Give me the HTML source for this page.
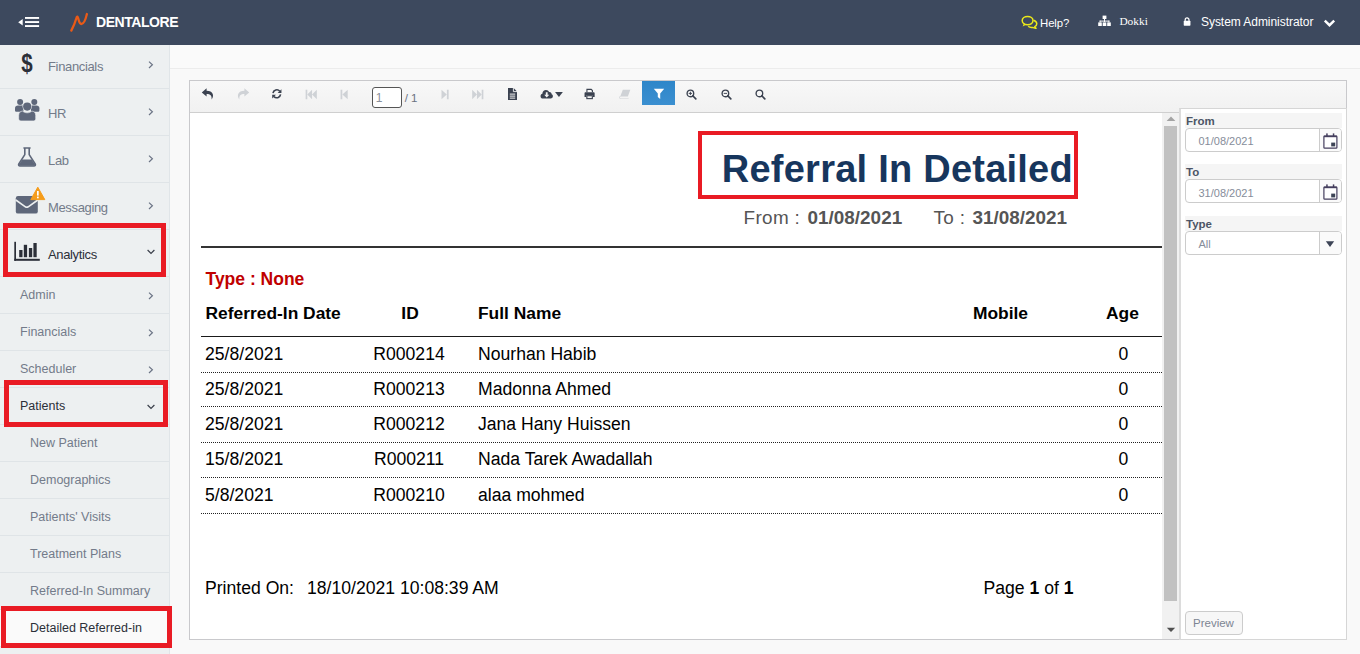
<!DOCTYPE html>
<html>
<head>
<meta charset="utf-8">
<title>Dentalore</title>
<style>
*{box-sizing:border-box;margin:0;padding:0}
html,body{width:1360px;height:654px;overflow:hidden;background:#f9f9f9;font-family:"Liberation Sans",sans-serif;}
body{position:relative}
.abs{position:absolute}
#topbar{position:absolute;left:0;top:0;width:1360px;height:45px;background:#3d495e;z-index:5}
#topbar .t{position:absolute;color:#fff;white-space:nowrap}
#sidebar{position:absolute;left:0;top:45px;width:170px;height:609px;background:#edf0f1;border-right:1px solid #e0e5e8;overflow:hidden}
.mi{position:absolute;left:0;width:169px;height:47px;border-bottom:1px solid #e0e4e7}
.mi .lbl{position:absolute;left:48px;top:17px;font-size:13px;color:#6b7280;white-space:nowrap;line-height:15px}
.mi.dark .lbl{color:#2b2f38}
.si{position:absolute;left:0;width:169px;height:37px;border-bottom:1px solid #e0e4e7}
.si .lbl{position:absolute;left:20px;top:10px;font-size:13px;color:#6b7280;white-space:nowrap;line-height:15px}
.si.l2 .lbl{left:30px}
.si.dark .lbl{color:#2b2f38}
.sl{font-size:12.5px;line-height:15px;white-space:nowrap}
.chev{position:absolute;left:146px;width:8px;height:10px}
.red{position:absolute;border:5px solid #e91b24;z-index:4}
#hdr{position:absolute;left:170px;top:45px;width:1190px;height:24px;background:#fafafa;border-bottom:1px solid #ececec}
#panel{position:absolute;left:189px;top:80px;width:1158px;height:559.5px;background:#fff;border:1px solid #c9c9cc}
#tb{position:absolute;left:0;top:0;width:1156px;height:32px;background:linear-gradient(#f8f8f8,#f1f1f1);border-bottom:1px solid #cfcfcf}
#panel>.abs{margin-left:0.7px}
.ic{position:absolute}
.rt{position:absolute;white-space:nowrap;color:#000;font-size:16px;line-height:18px}
.b{font-weight:bold}
.dot{position:absolute;left:11px;width:960px;height:0;border-top:1px dotted #222}
</style>
</head>
<body>
<div id="topbar">
<svg class="abs" style="left:18px;top:16px" width="22" height="12" viewBox="0 0 22 12"><path d="M0.2 6.3 L4.7 3 V9.6 Z" fill="#fff"/><rect x="7" y="1" width="14.1" height="1.9" fill="#fff"/><rect x="7" y="5.1" width="14.1" height="1.9" fill="#fff"/><rect x="7" y="9.1" width="14.1" height="1.9" fill="#fff"/></svg>
<svg class="abs" style="left:69px;top:12px" width="21" height="21" viewBox="0 0 21 21"><path d="M2.3 18.6 C4.2 15 6.4 9.6 7.8 5 C8.5 4.2 9 5.4 9.4 7 C10 9.6 10.8 12 12.4 12 C14.6 12 16.4 8.4 17.9 2" fill="none" stroke="#ea5a17" stroke-width="2.3" stroke-linecap="round" stroke-linejoin="round"/></svg>
<div class="t b" style="left:96px;top:14px;font-size:14px;line-height:16px;letter-spacing:-0.45px">DENTALORE</div>
<svg class="abs" style="left:1021px;top:15px" width="17" height="14" viewBox="0 0 17 14"><ellipse cx="6.6" cy="5.6" rx="5.4" ry="4.2" fill="none" stroke="#ece81a" stroke-width="1.5"/><path d="M3 8.6 L1.6 11.4 L5.6 9.6 Z" fill="#ece81a"/><path d="M12.6 5.2 C14.6 6 15.8 7.2 15.8 8.8 C15.8 10 15 11 13.8 11.6 L15 13.4 L11.4 12.4 C9.8 12.6 8.2 12.2 7.2 11.2" fill="none" stroke="#ece81a" stroke-width="1.5" stroke-linejoin="round"/></svg>
<div class="t" style="left:1040px;top:14.6px;font-size:11.4px;letter-spacing:-0.1px;line-height:16px">Help?</div>
<svg class="abs" style="left:1098px;top:15px" width="13" height="12" viewBox="0 0 13 12"><rect x="4.6" y="0.6" width="3.8" height="3.4" fill="#fff"/><rect x="6" y="4" width="1" height="3" fill="#fff"/><rect x="1.6" y="5.6" width="9.8" height="1" fill="#fff"/><rect x="1.6" y="5.6" width="1" height="2" fill="#fff"/><rect x="10.4" y="5.6" width="1" height="2" fill="#fff"/><rect x="0.2" y="7.4" width="3.6" height="3.6" fill="#fff"/><rect x="4.7" y="7.4" width="3.6" height="3.6" fill="#fff"/><rect x="9.2" y="7.4" width="3.6" height="3.6" fill="#fff"/></svg>
<div class="t" style="left:1119.4px;top:13px;font-size:11.4px;line-height:16px;font-family:'Liberation Serif',serif">Dokki</div>
<svg class="abs" style="left:1183.4px;top:17.3px" width="8.5" height="9.6" viewBox="0 0 10 12"><path d="M2.4 5 V3.6 C2.4 0.4 7.2 0.4 7.2 3.6 V5" fill="none" stroke="#fff" stroke-width="1.5"/><rect x="0.6" y="4.8" width="8.4" height="6" rx="0.8" fill="#fff"/></svg>
<div class="t" style="left:1201px;top:14.4px;font-size:12px;letter-spacing:-0.05px;line-height:16px">System Administrator</div>
<svg class="abs" style="left:1323px;top:18px" width="13" height="10" viewBox="0 0 13 10"><path d="M1.8 2.6 L6.5 7.2 L11.2 2.6" fill="none" stroke="#fff" stroke-width="2.4"/></svg>
</div>
<div id="sidebar"><div class="abs" style="left:0;top:43px;width:169px;height:1px;background:#dfe4e7"></div>
<div class="abs" style="left:0;top:90px;width:169px;height:1px;background:#dfe4e7"></div>
<div class="abs" style="left:0;top:137px;width:169px;height:1px;background:#dfe4e7"></div>
<div class="abs" style="left:0;top:184px;width:169px;height:1px;background:#dfe4e7"></div>
<div class="abs" style="left:0;top:231px;width:169px;height:1px;background:#dfe4e7"></div>
<div class="abs" style="left:0;top:268px;width:169px;height:1px;background:#dfe4e7"></div>
<div class="abs" style="left:0;top:305px;width:169px;height:1px;background:#dfe4e7"></div>
<div class="abs" style="left:0;top:342px;width:169px;height:1px;background:#dfe4e7"></div>
<div class="abs" style="left:0;top:379px;width:169px;height:1px;background:#dfe4e7"></div>
<div class="abs" style="left:0;top:416px;width:169px;height:1px;background:#dfe4e7"></div>
<div class="abs" style="left:0;top:453px;width:169px;height:1px;background:#dfe4e7"></div>
<div class="abs" style="left:0;top:490px;width:169px;height:1px;background:#dfe4e7"></div>
<div class="abs" style="left:0;top:527px;width:169px;height:1px;background:#dfe4e7"></div>
<div class="abs" style="left:0;top:564px;width:169px;height:1px;background:#dfe4e7"></div>
<div class="abs" style="left:0;top:601px;width:169px;height:1px;background:#dfe4e7"></div>
<div class="abs" style="left:0;top:565px;width:169px;height:36px;background:#fafafa"></div>
<div class="abs sl" style="left:48px;top:13.6px;font-size:13px;letter-spacing:-0.35px;color:#737b8a">Financials</div>
<div class="abs sl" style="left:48px;top:60.6px;font-size:13px;letter-spacing:-0.35px;color:#737b8a">HR</div>
<div class="abs sl" style="left:48px;top:107.6px;font-size:13px;letter-spacing:-0.35px;color:#737b8a">Lab</div>
<div class="abs sl" style="left:48px;top:154.6px;font-size:13px;letter-spacing:-0.35px;color:#737b8a">Messaging</div>
<div class="abs sl" style="left:48px;top:201.6px;font-size:13px;letter-spacing:-0.35px;color:#2b2f38">Analytics</div>
<svg class="abs" style="left:147px;top:14.6px" width="8" height="10" viewBox="0 0 8 10"><path d="M2 1.6 L5.4 4.8 L2 8" fill="none" stroke="#6b7485" stroke-width="1.2"/></svg>
<svg class="abs" style="left:147px;top:61.6px" width="8" height="10" viewBox="0 0 8 10"><path d="M2 1.6 L5.4 4.8 L2 8" fill="none" stroke="#6b7485" stroke-width="1.2"/></svg>
<svg class="abs" style="left:147px;top:108.6px" width="8" height="10" viewBox="0 0 8 10"><path d="M2 1.6 L5.4 4.8 L2 8" fill="none" stroke="#6b7485" stroke-width="1.2"/></svg>
<svg class="abs" style="left:147px;top:155.6px" width="8" height="10" viewBox="0 0 8 10"><path d="M2 1.6 L5.4 4.8 L2 8" fill="none" stroke="#6b7485" stroke-width="1.2"/></svg>
<svg class="abs" style="left:146px;top:203px" width="10" height="8" viewBox="0 0 10 8"><path d="M1.6 2 L5 5.4 L8.4 2" fill="none" stroke="#3a3f4a" stroke-width="1.2"/></svg>
<div class="abs sl" style="left:20px;top:243px;color:#737b8a">Admin</div>
<svg class="abs" style="left:147px;top:246.2px" width="8" height="10" viewBox="0 0 8 10"><path d="M2 1.6 L5.4 4.8 L2 8" fill="none" stroke="#6b7485" stroke-width="1.2"/></svg>
<div class="abs sl" style="left:20px;top:280px;color:#737b8a">Financials</div>
<svg class="abs" style="left:147px;top:283.2px" width="8" height="10" viewBox="0 0 8 10"><path d="M2 1.6 L5.4 4.8 L2 8" fill="none" stroke="#6b7485" stroke-width="1.2"/></svg>
<div class="abs sl" style="left:20px;top:317px;color:#737b8a">Scheduler</div>
<svg class="abs" style="left:147px;top:320.2px" width="8" height="10" viewBox="0 0 8 10"><path d="M2 1.6 L5.4 4.8 L2 8" fill="none" stroke="#6b7485" stroke-width="1.2"/></svg>
<div class="abs sl" style="left:20px;top:354px;color:#2b2f38">Patients</div>
<svg class="abs" style="left:146px;top:358px" width="10" height="8" viewBox="0 0 10 8"><path d="M1.6 2 L5 5.4 L8.4 2" fill="none" stroke="#3a3f4a" stroke-width="1.2"/></svg>
<div class="abs sl" style="left:30px;top:391px;color:#737b8a">New Patient</div>
<div class="abs sl" style="left:30px;top:428px;color:#737b8a">Demographics</div>
<div class="abs sl" style="left:30px;top:465px;color:#737b8a">Patients' Visits</div>
<div class="abs sl" style="left:30px;top:502px;color:#737b8a">Treatment Plans</div>
<div class="abs sl" style="left:30px;top:539px;color:#737b8a">Referred-In Summary</div>
<div class="abs sl" style="left:30px;top:576px;color:#2b2f38">Detailed Referred-in</div>
<div class="abs b" style="left:19px;top:2.8px;width:16px;text-align:center;font-size:25px;line-height:30px;color:#2b2f38;transform:scaleX(0.82);">$</div>
<svg class="abs" style="left:14px;top:53px" width="27" height="24" viewBox="0 0 27 24"><g fill="#5e677a"><circle cx="6.1" cy="3.9" r="3"/><circle cx="20.3" cy="3.9" r="3"/><path d="M1 10.2 C1 8.4 2.2 7.4 4 7.4 H8 C8.6 7.4 9 7.5 9.4 7.7 V13.2 C8.4 13.6 7.4 13.8 6.6 13.8 H2.6 C1.6 13.8 1 13.2 1 12.4 Z"/><path d="M25.4 10.2 C25.4 8.4 24.2 7.4 22.4 7.4 H18.4 C17.8 7.4 17.4 7.5 17 7.7 V13.2 C18 13.6 19 13.8 19.8 13.8 H23.8 C24.8 13.8 25.4 13.2 25.4 12.4 Z"/><circle cx="13.2" cy="8.6" r="4.7" fill="#edf0f1"/><circle cx="13.2" cy="8.6" r="4.1"/><path d="M4.7 17.4 C4.7 14.8 6.4 13.1 8.6 13.1 C9.8 14.2 11.4 14.8 13.2 14.8 C15 14.8 16.6 14.2 17.8 13.1 C20 13.1 21.7 14.8 21.7 17.4 V20.6 C21.7 22 20.8 22.9 19.4 22.9 H7 C5.6 22.9 4.7 22 4.7 20.6 Z" stroke="#edf0f1" stroke-width="0.6"/></g></svg>
<svg class="abs" style="left:17px;top:102px" width="20" height="20" viewBox="0 0 20 20"><path d="M6.4 1 H13.6 M7.8 1 V7.6 L1.8 17 C1.2 18 1.8 19 3 19 H17 C18.2 19 18.8 18 18.2 17 L12.2 7.6 V1" fill="none" stroke="#5e677a" stroke-width="1.6" stroke-linejoin="round"/><path d="M5.4 12.4 H14.6 L18 17.4 C18.4 18.2 18 18.8 17 18.8 H3 C2 18.8 1.6 18.2 2 17.4 Z" fill="#5e677a"/></svg>
<svg class="abs" style="left:15px;top:141px" width="31" height="29" viewBox="0 0 31 29"><rect x="0.8" y="10" width="22" height="17.6" rx="2.2" fill="#5e677a"/><path d="M0.8 14 L10.4 20.8 C11.4 21.4 12.2 21.4 13.2 20.8 L22.8 14" fill="none" stroke="#edf0f1" stroke-width="1.6"/><path d="M22.8 1.2 L29.8 13.6 H15.8 Z" fill="#f59c1a" stroke="#f59c1a" stroke-width="1" stroke-linejoin="round"/><rect x="22" y="5" width="1.7" height="4.6" fill="#fff"/><rect x="22" y="10.6" width="1.7" height="1.7" fill="#fff"/></svg>
<svg class="abs" style="left:14px;top:196px" width="27" height="21" viewBox="0 0 27 21"><g fill="#2b2f38"><rect x="0.3" y="0.8" width="1.7" height="19"/><rect x="0.3" y="17.8" width="25.5" height="2"/><rect x="5.2" y="9" width="3.3" height="7.2"/><rect x="9.8" y="3.8" width="3.3" height="12.4"/><rect x="14.9" y="7" width="3.3" height="9.2"/><rect x="19.4" y="2" width="3.3" height="14.2"/></g></svg></div>
<div id="hdr"></div>
<div class="red" style="left:3px;top:223px;width:163px;height:54px"></div>
<div class="red" style="left:4px;top:380px;width:164px;height:47px"></div>
<div class="red" style="left:1px;top:606px;width:171px;height:42px"></div>
<div class="red" style="left:698px;top:131px;width:380px;height:68px;border-width:4px"></div>

<div id="panel"><div id="tb"></div><svg class="abs" style="left:10px;top:6px" width="14" height="14" viewBox="0 0 14 14"><path d="M5.6 1.2 L0.8 5.4 L5.6 9.6 V7 C9.4 7 11 8.4 10.6 12.6 C13.6 8.6 12 3.8 5.6 3.8 Z" fill="#3b4250"/></svg>
<svg class="abs" style="left:45px;top:6px" width="14" height="14" viewBox="0 0 14 14"><path d="M8.4 1.2 L13.2 5.4 L8.4 9.6 V7 C4.6 7 3 8.4 3.4 12.6 C0.4 8.6 2 3.8 8.4 3.8 Z" fill="#cfd2d6"/></svg>
<svg class="abs" style="left:80.4px;top:7.2px" width="11.6" height="11.6" viewBox="0 0 14 14"><path d="M2.4 6.2 A4.7 4.7 0 0 1 10.6 3.8" fill="none" stroke="#3b4250" stroke-width="1.9"/><path d="M12.6 1.4 V6 H8 Z" fill="#3b4250"/><path d="M11.6 7.8 A4.7 4.7 0 0 1 3.4 10.2" fill="none" stroke="#3b4250" stroke-width="1.9"/><path d="M1.4 12.6 V8 H6 Z" fill="#3b4250"/></svg>
<svg class="abs" style="left:114.60000000000002px;top:7.599999999999994px" width="13" height="11" viewBox="0 0 14 12"><rect x="0.6" y="0.8" width="1.8" height="10.4" fill="#cfd2d6"/><path d="M7.6 0.8 V11.2 L2.4 6 Z M12.8 0.8 V11.2 L7.6 6 Z" fill="#cfd2d6"/></svg>
<svg class="abs" style="left:149.39999999999998px;top:7.599999999999994px" width="9.2" height="11" viewBox="0 0 10 12"><rect x="0.6" y="0.8" width="1.9" height="10.4" fill="#cfd2d6"/><path d="M8.4 0.8 V11.2 L2.6 6 Z" fill="#cfd2d6"/></svg>
<div class="abs" style="left:181px;top:6px;width:30px;height:21px;border:1px solid #555;border-radius:3px;background:#fff"></div>
<div class="abs" style="left:185px;top:10.200000000000003px;font-size:12px;line-height:15px;color:#8a909c">1</div>
<div class="abs" style="left:214px;top:10.200000000000003px;font-size:11.5px;line-height:15px;color:#6b7280;white-space:nowrap">/ 1</div>
<svg class="abs" style="left:249.39999999999998px;top:7.599999999999994px" width="9.2" height="11" viewBox="0 0 10 12"><rect x="7.5" y="0.8" width="1.9" height="10.4" fill="#cfd2d6"/><path d="M1.6 0.8 V11.2 L7.4 6 Z" fill="#cfd2d6"/></svg>
<svg class="abs" style="left:280.4px;top:7.599999999999994px" width="13" height="11" viewBox="0 0 14 12"><rect x="11.6" y="0.8" width="1.8" height="10.4" fill="#cfd2d6"/><path d="M6.4 0.8 V11.2 L11.6 6 Z M1.2 0.8 V11.2 L6.4 6 Z" fill="#cfd2d6"/></svg>
<svg class="abs" style="left:316px;top:6px" width="11" height="14" viewBox="0 0 11 14"><path d="M1 1 H6.6 L10 4.4 V13 H1 Z" fill="#3b4250"/><path d="M6.4 1 V4.6 H10" fill="none" stroke="#f4f4f4" stroke-width="0.9"/><rect x="2.8" y="6.6" width="5.4" height="1" fill="#f4f4f4"/><rect x="2.8" y="8.6" width="5.4" height="1" fill="#f4f4f4"/><rect x="2.8" y="10.6" width="5.4" height="1" fill="#f4f4f4"/></svg>
<svg class="abs" style="left:349.79999999999995px;top:7px" width="23.6" height="12.7" viewBox="0 0 26 14"><path d="M3.4 11.6 C1.6 11.6 0.6 10.4 0.6 9 C0.6 7.6 1.4 6.8 2.6 6.4 C2.6 3.8 4.4 2.2 6.6 2.2 C8.2 2.2 9.4 3 10 4.4 C11.8 4.2 13 5.4 12.8 7 C13.8 7.4 14.2 8.2 14.2 9.2 C14.2 10.6 13.2 11.6 11.8 11.6 Z" fill="#3b4250"/><path d="M6.4 4.8 H8.4 V7.4 H10.2 L7.4 10.4 L4.6 7.4 H6.4 Z" fill="#f4f4f4"/><path d="M16.6 4.4 H25.2 L20.9 10 Z" fill="#3b4250"/></svg>
<svg class="abs" style="left:393.6px;top:7.400000000000006px" width="11.2" height="12" viewBox="0 0 13 14"><path d="M3.4 5 V1.6 H8.4 L9.8 3 V5" fill="none" stroke="#3b4250" stroke-width="1.3"/><path d="M1.8 5 H11.2 C12 5 12.4 5.6 12.4 6.2 V10.4 H10.4 V8.4 H2.6 V10.4 H0.6 V6.2 C0.6 5.6 1 5 1.8 5 Z" fill="#3b4250"/><rect x="3.3" y="9" width="6.4" height="3.4" fill="none" stroke="#3b4250" stroke-width="1.3"/></svg>
<svg class="abs" style="left:428.20000000000005px;top:7.799999999999997px" width="12.2" height="10.4" viewBox="0 0 14 12"><path d="M4.4 1 H13 L10.2 8.8 H2 C0.6 8.8 0.6 10.8 2 10.8 H10.6 L11 10 V11.4 H2 C-0.4 11.4 -0.2 8.4 1.6 8 Z" fill="#cfd2d6"/></svg>
<div class="abs" style="left:451px;top:0px;width:33px;height:24px;background:linear-gradient(#2e86c9,#3b8fd0);"></div>
<svg class="abs" style="left:462px;top:7px" width="12" height="12" viewBox="0 0 12 12"><path d="M0.8 0.8 H11.2 L7.2 5.6 V11 L4.8 9 V5.6 Z" fill="#fff"/></svg>
<svg class="abs" style="left:495.6px;top:7.799999999999997px" width="11" height="11" viewBox="0 0 13 13"><circle cx="5.2" cy="5.2" r="3.9" fill="none" stroke="#3b4250" stroke-width="1.6"/><path d="M8 8 L11.6 11.6" stroke="#3b4250" stroke-width="2" stroke-linecap="round"/><path d="M3.2 5.2 H7.2 M5.2 3.2 V7.2" stroke="#3b4250" stroke-width="1.1"/></svg>
<svg class="abs" style="left:530.1px;top:7.799999999999997px" width="11" height="11" viewBox="0 0 13 13"><circle cx="5.2" cy="5.2" r="3.9" fill="none" stroke="#3b4250" stroke-width="1.6"/><path d="M8 8 L11.6 11.6" stroke="#3b4250" stroke-width="2" stroke-linecap="round"/><path d="M3.2 5.2 H7.2" stroke="#3b4250" stroke-width="1.1"/></svg>
<svg class="abs" style="left:564.6px;top:7.799999999999997px" width="11" height="11" viewBox="0 0 13 13"><circle cx="5.2" cy="5.2" r="3.9" fill="none" stroke="#3b4250" stroke-width="1.6"/><path d="M8 8 L11.6 11.6" stroke="#3b4250" stroke-width="2" stroke-linecap="round"/></svg></div>
<div id="rep" class="abs" style="left:0;top:0;width:1360px;height:654px;z-index:2;pointer-events:none">
<div class="rt b" style="left:721.8px;top:147.2px;font-size:38px;letter-spacing:0.24px;line-height:44px;color:#17365d">Referral In Detailed</div>
<div class="rt" style="left:743.5px;top:206.6px;font-size:18.9px;letter-spacing:0.35px;line-height:22px;color:#555">From :</div>
<div class="rt b" style="left:807.6px;top:206.6px;font-size:18.9px;line-height:22px;color:#555">01/08/2021</div>
<div class="rt" style="left:933.5px;top:206.6px;font-size:18.9px;letter-spacing:0.35px;line-height:22px;color:#555">To :</div>
<div class="rt b" style="left:972.4px;top:206.6px;font-size:18.9px;line-height:22px;color:#555">31/08/2021</div>
<div class="abs" style="left:201px;top:246px;width:961px;height:1.5px;background:#333"></div>
<div class="rt b" style="left:205.5px;top:268.7px;font-size:17.5px;line-height:20px;color:#c00000">Type : None</div>
<div class="rt b" style="left:205.5px;top:302.7px;font-size:17.4px;line-height:20px">Referred-In Date</div>
<div class="rt b" style="left:360px;width:100px;text-align:center;top:302.7px;font-size:17.4px;line-height:20px">ID</div>
<div class="rt b" style="left:478px;top:302.7px;font-size:17.4px;line-height:20px">Full Name</div>
<div class="rt b" style="left:950px;width:101px;text-align:center;top:302.7px;font-size:17.4px;line-height:20px">Mobile</div>
<div class="rt b" style="left:1072px;width:101px;text-align:center;top:302.7px;font-size:17.4px;line-height:20px">Age</div>
<div class="abs" style="left:201px;top:335.8px;width:961px;height:1.6px;background:#1a1a1a"></div>
<div class="rt" style="left:205px;top:343.9px;font-size:17.6px;line-height:20px">25/8/2021</div>
<div class="rt" style="left:359px;width:100px;text-align:center;top:343.9px;font-size:17.6px;line-height:20px">R000214</div>
<div class="rt" style="left:478px;top:343.9px;font-size:17.6px;line-height:20px">Nourhan Habib</div>
<div class="rt" style="left:1072.8px;width:101px;text-align:center;top:343.9px;font-size:17.6px;line-height:20px">0</div>
<div class="abs" style="left:201px;top:372px;width:961px;height:0;border-top:1px dotted #222"></div>
<div class="rt" style="left:205px;top:378.9px;font-size:17.6px;line-height:20px">25/8/2021</div>
<div class="rt" style="left:359px;width:100px;text-align:center;top:378.9px;font-size:17.6px;line-height:20px">R000213</div>
<div class="rt" style="left:478px;top:378.9px;font-size:17.6px;line-height:20px">Madonna Ahmed</div>
<div class="rt" style="left:1072.8px;width:101px;text-align:center;top:378.9px;font-size:17.6px;line-height:20px">0</div>
<div class="abs" style="left:201px;top:406px;width:961px;height:0;border-top:1px dotted #222"></div>
<div class="rt" style="left:205px;top:414.2px;font-size:17.6px;line-height:20px">25/8/2021</div>
<div class="rt" style="left:359px;width:100px;text-align:center;top:414.2px;font-size:17.6px;line-height:20px">R000212</div>
<div class="rt" style="left:478px;top:414.2px;font-size:17.6px;line-height:20px">Jana Hany Huissen</div>
<div class="rt" style="left:1072.8px;width:101px;text-align:center;top:414.2px;font-size:17.6px;line-height:20px">0</div>
<div class="abs" style="left:201px;top:442px;width:961px;height:0;border-top:1px dotted #222"></div>
<div class="rt" style="left:205px;top:449.4px;font-size:17.6px;line-height:20px">15/8/2021</div>
<div class="rt" style="left:359px;width:100px;text-align:center;top:449.4px;font-size:17.6px;line-height:20px">R000211</div>
<div class="rt" style="left:478px;top:449.4px;font-size:17.6px;line-height:20px">Nada Tarek Awadallah</div>
<div class="rt" style="left:1072.8px;width:101px;text-align:center;top:449.4px;font-size:17.6px;line-height:20px">0</div>
<div class="abs" style="left:201px;top:477px;width:961px;height:0;border-top:1px dotted #222"></div>
<div class="rt" style="left:205px;top:484.5px;font-size:17.6px;line-height:20px">5/8/2021</div>
<div class="rt" style="left:359px;width:100px;text-align:center;top:484.5px;font-size:17.6px;line-height:20px">R000210</div>
<div class="rt" style="left:478px;top:484.5px;font-size:17.6px;line-height:20px">alaa mohmed</div>
<div class="rt" style="left:1072.8px;width:101px;text-align:center;top:484.5px;font-size:17.6px;line-height:20px">0</div>
<div class="abs" style="left:201px;top:513px;width:961px;height:0;border-top:1px dotted #222"></div>
<div class="rt" style="left:205px;top:578px;font-size:17.6px;line-height:20px">Printed On:</div>
<div class="rt" style="left:307px;top:578px;font-size:17.6px;line-height:20px">18/10/2021 10:08:39 AM</div>
<div class="rt" style="left:983.5px;top:578px;font-size:17.6px;line-height:20px">Page <b>1</b> of <b>1</b></div>
<div class="abs" style="left:1162px;top:113px;width:17px;height:526px;background:#f1f1f1"></div>
<div class="abs" style="left:1164px;top:126px;width:13px;height:475px;background:#c1c1c1"></div>
<svg class="abs" style="left:1166px;top:116px" width="10" height="6" viewBox="0 0 10 6"><path d="M0.6 5 L5 0.6 L9.4 5 Z" fill="#a3a3a3"/></svg>
<svg class="abs" style="left:1166px;top:627px" width="10" height="6" viewBox="0 0 10 6"><path d="M0.8 0.8 L5 5 L9.2 0.8 Z" fill="#505050"/></svg>
<div class="abs" style="left:1179px;top:108px;width:168px;height:532px;background:#fff;border:1px solid #d6d6d6;border-left:2px solid #dcdcdc"></div>
<div class="abs" style="left:1185px;top:113px;width:157px;height:15px;background:#f5f5f5"></div><div class="abs b" style="left:1186px;top:113.8px;font-size:11.5px;line-height:15px;color:#4c5566">From</div>
<div class="abs" style="left:1185px;top:128px;width:157px;height:24px;border:1px solid #ccc;border-radius:4px;background:#fff"></div><div class="abs" style="left:1319px;top:128px;width:1px;height:24px;background:#ccc"></div><div class="abs" style="left:1320px;top:129px;width:21px;height:22px;background:#fafafa;border-radius:0 3px 3px 0"></div><div class="abs" style="left:1198.5px;top:134.0px;font-size:11px;line-height:14px;color:#868d9a">01/08/2021</div>
<svg class="abs" style="left:1323px;top:132.5px" width="15" height="16" viewBox="0 0 15 16"><rect x="0.9" y="3" width="13" height="12.2" rx="0.8" fill="#fff" stroke="#453f5e" stroke-width="1.2"/><rect x="0.9" y="2.6" width="13" height="1.6" fill="#453f5e"/><rect x="3.2" y="0.4" width="1.5" height="3.4" fill="#453f5e"/><rect x="9.8" y="0.4" width="1.5" height="3.4" fill="#453f5e"/><rect x="8.2" y="9.6" width="4" height="3.8" fill="#3d4456"/></svg>
<div class="abs" style="left:1185px;top:164px;width:157px;height:15px;background:#f5f5f5"></div><div class="abs b" style="left:1186px;top:164.8px;font-size:11.5px;line-height:15px;color:#4c5566">To</div>
<div class="abs" style="left:1185px;top:179px;width:157px;height:24px;border:1px solid #ccc;border-radius:4px;background:#fff"></div><div class="abs" style="left:1319px;top:179px;width:1px;height:24px;background:#ccc"></div><div class="abs" style="left:1320px;top:180px;width:21px;height:22px;background:#fafafa;border-radius:0 3px 3px 0"></div><div class="abs" style="left:1198.5px;top:185.5px;font-size:11px;line-height:14px;color:#868d9a">31/08/2021</div>
<svg class="abs" style="left:1323px;top:183.5px" width="15" height="16" viewBox="0 0 15 16"><rect x="0.9" y="3" width="13" height="12.2" rx="0.8" fill="#fff" stroke="#453f5e" stroke-width="1.2"/><rect x="0.9" y="2.6" width="13" height="1.6" fill="#453f5e"/><rect x="3.2" y="0.4" width="1.5" height="3.4" fill="#453f5e"/><rect x="9.8" y="0.4" width="1.5" height="3.4" fill="#453f5e"/><rect x="8.2" y="9.6" width="4" height="3.8" fill="#3d4456"/></svg>
<div class="abs" style="left:1185px;top:216px;width:157px;height:15px;background:#f5f5f5"></div><div class="abs b" style="left:1186px;top:216.8px;font-size:11.5px;line-height:15px;color:#4c5566">Type</div>
<div class="abs" style="left:1185px;top:231px;width:157px;height:24px;border:1px solid #ccc;border-radius:4px;background:#fff"></div><div class="abs" style="left:1319px;top:231px;width:1px;height:24px;background:#ccc"></div><div class="abs" style="left:1320px;top:232px;width:21px;height:22px;background:#fafafa;border-radius:0 3px 3px 0"></div><div class="abs" style="left:1198.5px;top:237.0px;font-size:11px;line-height:14px;color:#868d9a">All</div>
<svg class="abs" style="left:1325px;top:240px" width="10" height="8" viewBox="0 0 10 8"><path d="M0.8 1.2 H9.2 L5 7 Z" fill="#3d4456"/></svg>
<div class="abs" style="left:1185px;top:611px;width:58px;height:24px;border:1px solid #ccc;border-radius:4px;background:#f7f7f7"></div><div class="abs" style="left:1193px;top:616px;font-size:11.5px;line-height:14px;color:#7d8593">Preview</div>
</div>
</body>
</html>
